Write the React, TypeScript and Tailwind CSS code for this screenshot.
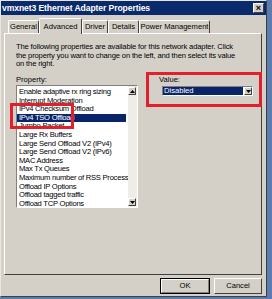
import React from "react";

const items = [
  "Enable adaptive rx ring sizing",
  "Interrupt Moderation",
  "IPv4 Checksum Offload",
  "IPv4 TSO Offload",
  "Jumbo Packet",
  "Large Rx Buffers",
  "Large Send Offload V2 (IPv4)",
  "Large Send Offload V2 (IPv6)",
  "MAC Address",
  "Max Tx Queues",
  "Maximum number of RSS Processors",
  "Offload IP Options",
  "Offload tagged traffic",
  "Offload TCP Options",
];

const tabs = [
  { title: "General", w: "w-[31px]" },
  { title: "Advanced", w: "w-[43px]", active: true },
  { title: "Driver", w: "w-[26px]" },
  { title: "Details", w: "w-[31px]" },
  { title: "Power Management", w: "w-[71px]" },
];

function Arrow({ up }: { up?: boolean }) {
  return (
    <div className="w-[8px] h-[8px] bg-[#d4d0c8] border border-t-white border-l-white border-r-[#404040] border-b-[#404040] flex items-center justify-center">
      <svg width="5" height="3" viewBox="0 0 5 3">
        <path d={up ? "M0 3 L2.5 0 L5 3 Z" : "M0 0 L2.5 3 L5 0 Z"} fill="#000" />
      </svg>
    </div>
  );
}

export default function App() {
  return (
    <div className="relative w-[272px] h-[299px] bg-[#5a7cae] overflow-hidden font-['Liberation_Sans',Arial,sans-serif] text-black">
      <div className="w-[267px] h-[297px] bg-[#d4d0c8] border border-t-[#e8e6e1] border-l-[#e8e6e1] border-r-[#404040] border-b-[#404040] flex flex-col">
        {/* title bar */}
        <div className="h-[14px] bg-[#0b2a6c] flex items-center justify-between pl-[1px] pr-[2px]">
          <span className="text-white font-bold text-[8.6px] leading-none tracking-[-0.1px]">
            vmxnet3 Ethernet Adapter Properties
          </span>
          <div className="w-[11px] h-[10px] bg-[#d4d0c8] border border-t-white border-l-white border-r-[#404040] border-b-[#404040] flex items-center justify-center text-[9px] font-bold leading-none">
            ×
          </div>
        </div>

        {/* tabs */}
        <div className="flex items-end h-[17px] pl-[7px] mt-[1px] text-[7.6px]">
          {tabs.map((t) => (
            <div
              key={t.title}
              className={`${t.w} ${
                t.active
                  ? "h-[16px] bg-[#d4d0c8] -mb-[1px] z-10 relative"
                  : "h-[13px]"
              } border-t border-l border-r border-t-white border-l-white border-r-[#404040] rounded-t-[2px] flex items-center justify-center leading-none whitespace-nowrap`}
            >
              {t.title}
            </div>
          ))}
        </div>

        {/* panel */}
        <div className="ml-[3px] w-[258px] h-[242px] border border-t-white border-l-white border-r-[#404040] border-b-[#404040] pl-[11px] pt-[9px] text-[7.6px]">
          <p className="leading-[8.5px] whitespace-nowrap tracking-[-0.15px]">
            The following properties are available for this network adapter. Click
            <br />
            the property you want to change on the left, and then select its value
            <br />
            on the right.
          </p>
          <div className="flex mt-[7px]">
            <div className="w-[122px]">
              <div className="leading-[8.5px]">Property:</div>
              <div className="mt-[1px] h-[123px] bg-white border border-t-[#808080] border-l-[#808080] border-r-white border-b-white flex">
                <div className="flex-1 overflow-hidden pt-[2px]">
                  {items.map((it) => (
                    <div
                      key={it}
                      className={`h-[8.6px] leading-[8.6px] pl-[2px] whitespace-nowrap tracking-[-0.25px] ${
                        it === "IPv4 TSO Offload" ? "bg-[#0a246a] text-white mr-[2px]" : ""
                      }`}
                    >
                      {it}
                    </div>
                  ))}
                </div>
                <div className="w-[9px] flex flex-col justify-between bg-[#eeede8] py-[1px]">
                  <Arrow up />
                  <Arrow />
                </div>
              </div>
            </div>
            <div className="ml-[24px]">
              <div className="leading-[8.5px] ml-[-3px]">Value:</div>
              <div className="mt-[2px] w-[91px] h-[10px] bg-white border border-t-[#808080] border-l-[#808080] border-r-white border-b-white flex items-center">
                <div className="flex-1 h-full bg-[#0a246a] text-white leading-[8px] pl-[1px] mr-[1px]">Disabled</div>
                <Arrow />
              </div>
            </div>
          </div>
        </div>

        {/* buttons */}
        <div className="flex justify-end gap-[4px] pr-[4px] mt-[3px] text-[7.6px]">
          <div className="w-[50px] h-[16px] border border-[#000] flex items-center justify-center bg-[#d4d0c8]">
            <div className="w-full h-full border border-t-white border-l-white border-r-[#808080] border-b-[#808080] flex items-center justify-center">OK</div>
          </div>
          <div className="w-[48px] h-[16px] border border-t-white border-l-white border-r-[#404040] border-b-[#404040] flex items-center justify-center">
            Cancel
          </div>
        </div>
      </div>

      {/* red annotation boxes */}
      <div className="absolute left-[10px] top-[103px] w-[64px] h-[26px] border-[3px] border-[#e0202a]" />
      <div className="absolute left-[146px] top-[72px] w-[116px] h-[35px] border-[3px] border-[#e0202a]" />
    </div>
  );
}
